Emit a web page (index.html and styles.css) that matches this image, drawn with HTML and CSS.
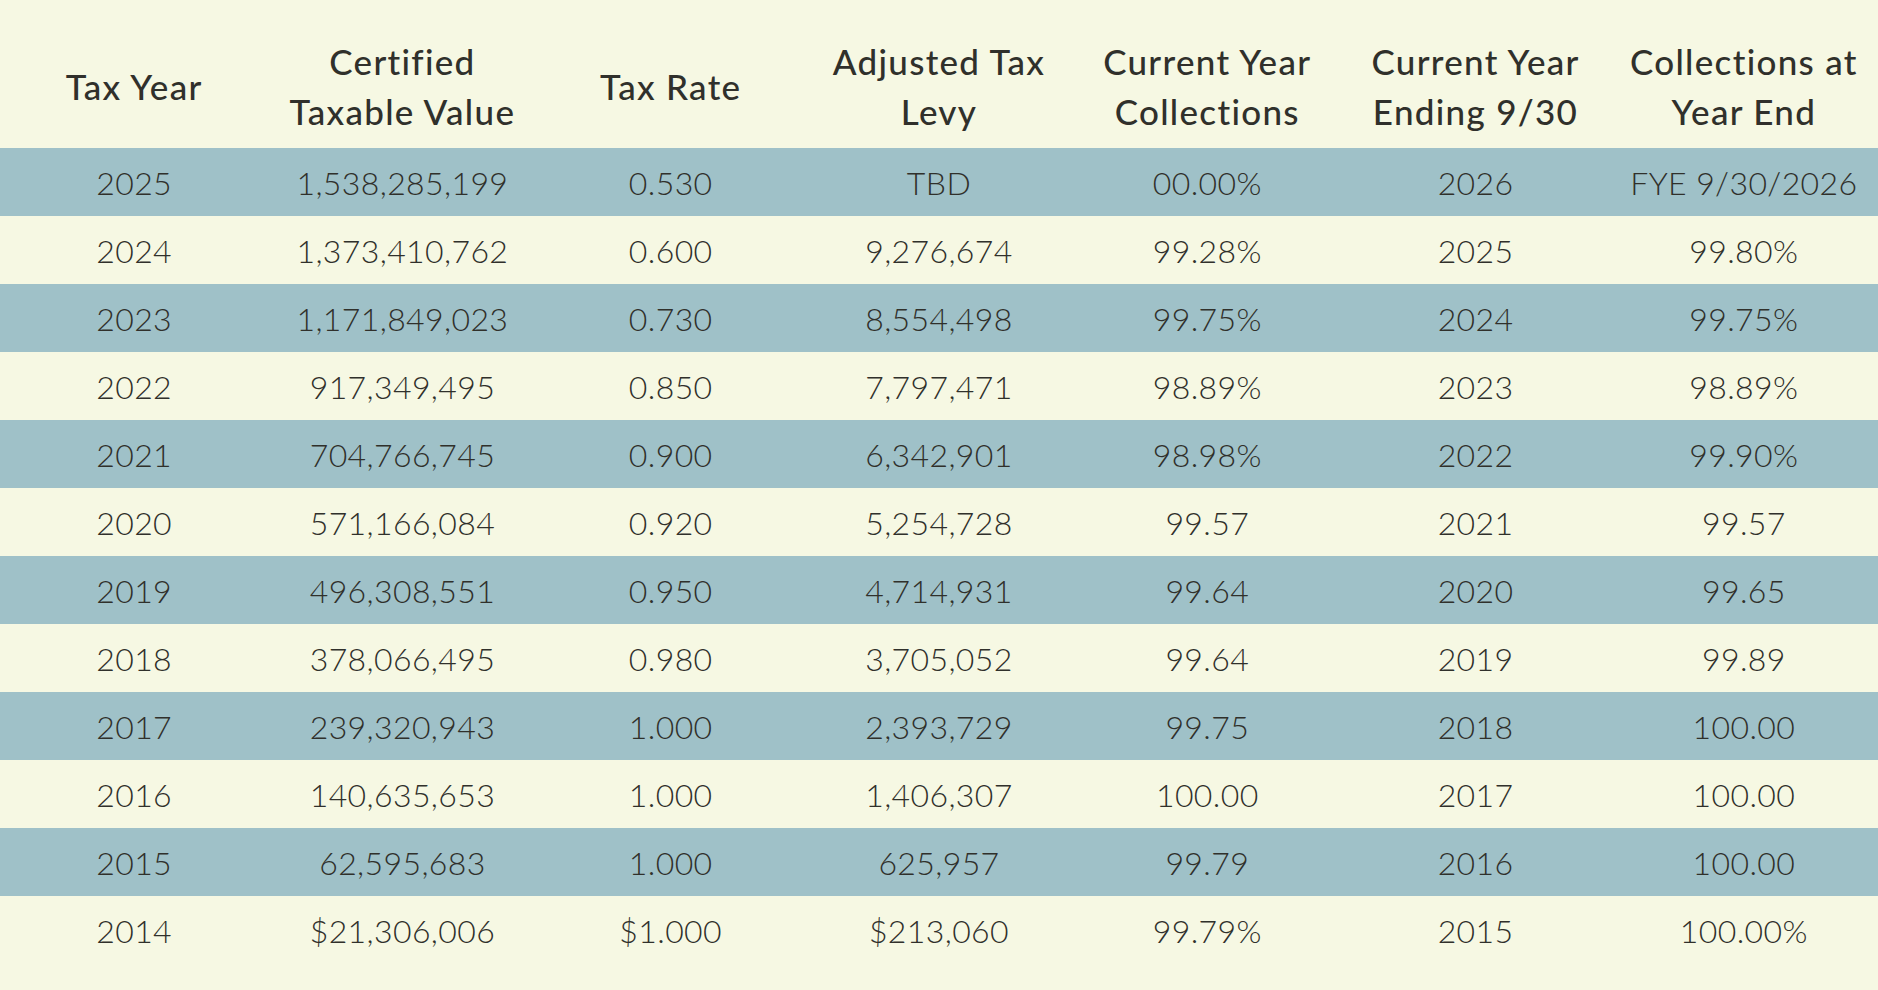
FILE: index.html
```html
<!DOCTYPE html>
<html>
<head>
<meta charset="utf-8">
<link rel="stylesheet" href="styles.css">
</head>
<body>
<table class="tax">
  <thead>
    <tr>
      <th>Tax Year</th>
      <th>Certified<br>Taxable Value</th>
      <th>Tax Rate</th>
      <th>Adjusted Tax<br>Levy</th>
      <th>Current Year<br>Collections</th>
      <th>Current Year<br>Ending 9/30</th>
      <th>Collections at<br>Year End</th>
    </tr>
  </thead>
  <tbody>
    <tr><td>2025</td><td>1,538,285,199</td><td>0.530</td><td>TBD</td><td>00.00%</td><td>2026</td><td>FYE 9/30/2026</td></tr>
    <tr><td>2024</td><td>1,373,410,762</td><td>0.600</td><td>9,276,674</td><td>99.28%</td><td>2025</td><td>99.80%</td></tr>
    <tr><td>2023</td><td>1,171,849,023</td><td>0.730</td><td>8,554,498</td><td>99.75%</td><td>2024</td><td>99.75%</td></tr>
    <tr><td>2022</td><td>917,349,495</td><td>0.850</td><td>7,797,471</td><td>98.89%</td><td>2023</td><td>98.89%</td></tr>
    <tr><td>2021</td><td>704,766,745</td><td>0.900</td><td>6,342,901</td><td>98.98%</td><td>2022</td><td>99.90%</td></tr>
    <tr><td>2020</td><td>571,166,084</td><td>0.920</td><td>5,254,728</td><td>99.57</td><td>2021</td><td>99.57</td></tr>
    <tr><td>2019</td><td>496,308,551</td><td>0.950</td><td>4,714,931</td><td>99.64</td><td>2020</td><td>99.65</td></tr>
    <tr><td>2018</td><td>378,066,495</td><td>0.980</td><td>3,705,052</td><td>99.64</td><td>2019</td><td>99.89</td></tr>
    <tr><td>2017</td><td>239,320,943</td><td>1.000</td><td>2,393,729</td><td>99.75</td><td>2018</td><td>100.00</td></tr>
    <tr><td>2016</td><td>140,635,653</td><td>1.000</td><td>1,406,307</td><td>100.00</td><td>2017</td><td>100.00</td></tr>
    <tr><td>2015</td><td>62,595,683</td><td>1.000</td><td>625,957</td><td>99.79</td><td>2016</td><td>100.00</td></tr>
    <tr><td>2014</td><td>$21,306,006</td><td>$1.000</td><td>$213,060</td><td>99.79%</td><td>2015</td><td>100.00%</td></tr>
  </tbody>
</table>
</body>
</html>
```

FILE: styles.css
```css
html, body {
  margin: 0;
  padding: 0;
  background: #f6f8e3;
}
body {
  font-family: Lato, "Open Sans", sans-serif;
  color: #30302b;
}
.tax {
  width: 100%;
  border-collapse: collapse;
  table-layout: fixed;
}
.tax th {
  height: 148px;
  box-sizing: border-box;
  padding: 24px 0 0;
  font-size: 35px;
  font-weight: 500;
  line-height: 50px;
  letter-spacing: 1.3px;
  text-align: center;
  vertical-align: middle;
  white-space: nowrap;
}
.tax td {
  height: 68px;
  padding: 0;
  font-size: 32px;
  font-weight: 300;
  letter-spacing: 0.4px;
  text-align: center;
  vertical-align: middle;
  white-space: nowrap;
}
.tax tbody tr:nth-child(odd) {
  background: #9fc1c8;
}
```
